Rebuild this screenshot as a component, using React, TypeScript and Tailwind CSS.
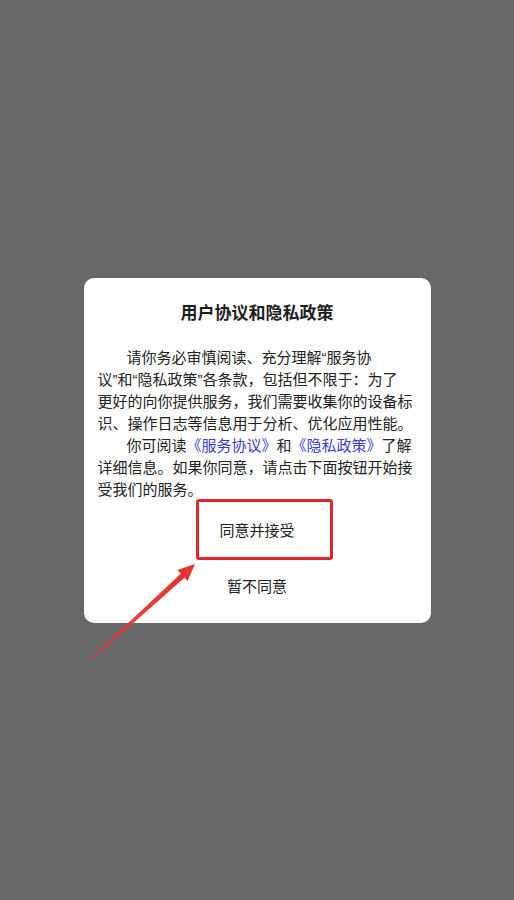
import React from 'react';

const bodyLines: { text: React.ReactNode; indent?: boolean }[] = [
    { text: '请你务必审慎阅读、充分理解“服务协', indent: true },
    { text: '议”和“隐私政策”各条款，包括但不限于：为了' },
    { text: '更好的向你提供服务，我们需要收集你的设备标' },
    { text: '识、操作日志等信息用于分析、优化应用性能。' },
    {
        text: (
            <>
                你可阅读<span className="text-[#3b3bd2]">《服务协议》</span>和
                <span className="text-[#3b3bd2]">《隐私政策》</span>了解
            </>
        ),
        indent: true,
    },
    { text: '详细信息。如果你同意，请点击下面按钮开始接' },
    { text: '受我们的服务。' },
];

function Arrow() {
    return (
        <svg className="pointer-events-none absolute left-0 top-0" width="514" height="900" viewBox="0 0 514 900">
            <defs>
                <linearGradient id="shaft" x1="89" y1="661" x2="185" y2="573" gradientUnits="userSpaceOnUse">
                    <stop offset="0" stopColor="#e5322d" stopOpacity="0.45" />
                    <stop offset="0.35" stopColor="#e5322d" stopOpacity="0.9" />
                    <stop offset="1" stopColor="#e5322d" stopOpacity="1" />
                </linearGradient>
            </defs>
            <polygon points="89.7,661.7 88.3,660.3 182.3,572.2 186.1,576.2" fill="url(#shaft)" />
            <polygon points="195,564 187.6,581 177.4,570" fill="#e5322d" />
        </svg>
    );
}

export default function App() {
    return (
        <div
            className="relative flex h-[900px] w-full items-center justify-center bg-[#686868]"
            style={{ fontFamily: '"Liberation Sans", "Noto Sans CJK SC", sans-serif' }}
        >
            <div className="relative w-[347px] rounded-[10px] bg-white pt-[24px] pb-[10px]">
                <h2 className="text-center text-[17px] font-bold leading-[24px] text-[#1e1e1e]">用户协议和隐私政策</h2>

                <div className="mt-[21px] px-[14px] text-[15px] leading-[22px] text-[#222]">
                    {bodyLines.map((line, i) => (
                        <div key={i} className={`whitespace-nowrap ${line.indent ? 'pl-[29px]' : ''}`}>
                            {line.text}
                        </div>
                    ))}
                </div>

                <button className="flex h-[62px] w-full items-center justify-center text-[15px] text-[#222]">
                    同意并接受
                </button>
                <button className="flex h-[50px] w-full items-center justify-center text-[15px] text-[#222]">
                    暂不同意
                </button>

                {/* annotation box */}
                <div className="pointer-events-none absolute left-[112px] top-[221px] h-[61px] w-[137px] rounded-[3px] border-[3px] border-[#e0262a]" />
            </div>

            <Arrow />
        </div>
    );
}
